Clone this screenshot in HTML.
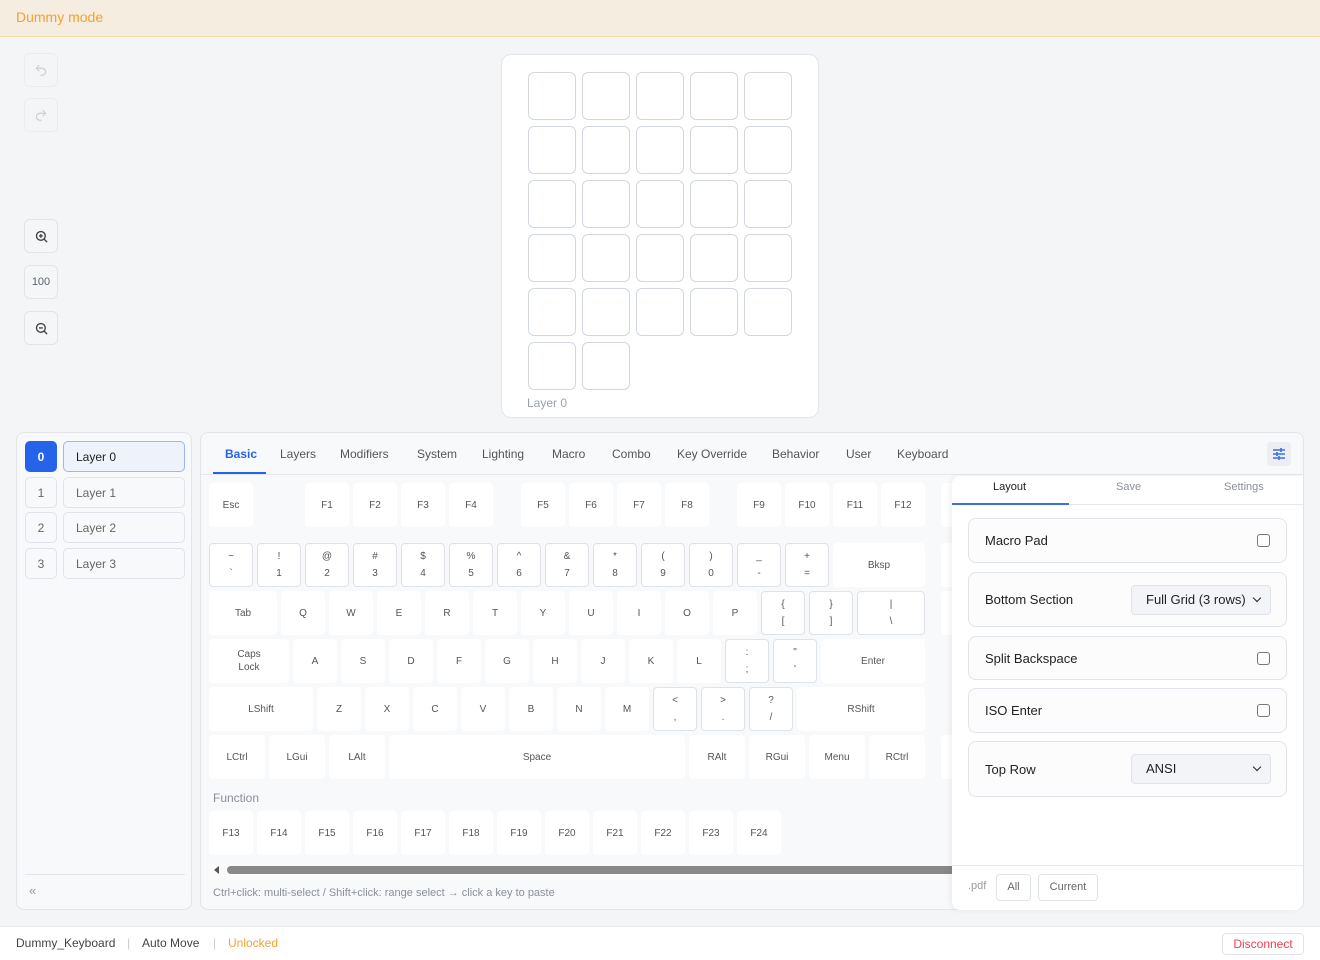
<!DOCTYPE html>
<html><head><meta charset="utf-8"><style>
*{box-sizing:border-box;margin:0;padding:0}
body{width:1320px;height:960px;background:#f4f5f7;font-family:"Liberation Sans",sans-serif;position:relative;overflow:hidden;color:#333}
.a{position:absolute}
.top{left:0;top:0;width:1320px;height:37px;background:#f5ede0;border-bottom:1px solid #f6d9a8;color:#f5a030;font-size:14px;padding:9px 16px}
.sb{position:absolute;left:24px;width:34px;height:34px;border:1px solid #e2e4ea;border-radius:6px;display:flex;align-items:center;justify-content:center;font-size:11px;color:#5a6170;background:#f5f6f8}
.card{background:#fff;border:1px solid #e3e5ea;border-radius:10px}
.mk{position:absolute;width:48px;height:48px;border:1.5px solid #d2d7e0;border-radius:6px;background:#fff}
.k{position:absolute;width:44px;height:44px;background:#fff;border-radius:4px;font-size:10px;color:#555;display:flex;align-items:center;justify-content:center;text-align:center;line-height:13px}
.b{border:1px solid #dfe2e8}
.d{flex-direction:column;justify-content:space-around;padding:4px 0}
.tab{position:absolute;top:447px;font-size:12px;color:#555}
.row{position:absolute;left:968px;width:319px;border:1px solid #e1e3ea;border-radius:8px;background:#fcfcfd;font-size:13px;color:#222;padding-left:16px;display:flex;align-items:center}
.cb{position:absolute;right:16px;width:13px;height:13px;border:1.3px solid #777;border-radius:3px}
.sel{position:absolute;left:162px;width:140px;height:30px;background:#f3f4f7;border:1px solid #e1e3ea;border-radius:4px;font-size:13px;padding:6px 14px;color:#222}
.sel:after{content:"";position:absolute;right:10px;top:9px;width:5px;height:5px;border-right:1.6px solid #222;border-bottom:1.6px solid #222;transform:rotate(45deg)}
.ln{position:absolute;left:25px;width:32px;height:31px;border:1px solid #e1e3ea;border-radius:5px;font-size:12px;color:#666;display:flex;align-items:center;justify-content:center}
.lb{position:absolute;left:63px;width:122px;height:31px;border:1px solid #e1e3ea;border-radius:5px;font-size:12px;color:#666;padding:8px 12px}
</style></head><body>
<div class="a top">Dummy mode</div>

<div class="sb" style="top:53px;opacity:.5"><svg width="14" height="14" viewBox="0 0 24 24" fill="none" stroke="#aaa" stroke-width="2"><path d="M9 14L4 9l5-5"/><path d="M4 9h10a6 6 0 0 1 0 12h-3"/></svg></div>
<div class="sb" style="top:98px;opacity:.5"><svg width="14" height="14" viewBox="0 0 24 24" fill="none" stroke="#aaa" stroke-width="2"><path d="M15 14l5-5-5-5"/><path d="M20 9H10a6 6 0 0 0 0 12h3"/></svg></div>
<div class="sb" style="top:219px"><svg width="15" height="15" viewBox="0 0 24 24" fill="none" stroke="#444" stroke-width="2.2"><circle cx="11" cy="11" r="7"/><path d="M21 21l-5-5M11 8v6M8 11h6"/></svg></div>
<div class="sb" style="top:265px">100</div>
<div class="sb" style="top:311px"><svg width="15" height="15" viewBox="0 0 24 24" fill="none" stroke="#444" stroke-width="2.2"><circle cx="11" cy="11" r="7"/><path d="M21 21l-5-5M8 11h6"/></svg></div>

<div class="a card" style="left:501px;top:54px;width:318px;height:364px"></div>
<div class="mk" style="left:528px;top:72px"></div><div class="mk" style="left:582px;top:72px"></div><div class="mk" style="left:636px;top:72px"></div><div class="mk" style="left:690px;top:72px"></div><div class="mk" style="left:744px;top:72px"></div>
<div class="mk" style="left:528px;top:126px"></div><div class="mk" style="left:582px;top:126px"></div><div class="mk" style="left:636px;top:126px"></div><div class="mk" style="left:690px;top:126px"></div><div class="mk" style="left:744px;top:126px"></div>
<div class="mk" style="left:528px;top:180px"></div><div class="mk" style="left:582px;top:180px"></div><div class="mk" style="left:636px;top:180px"></div><div class="mk" style="left:690px;top:180px"></div><div class="mk" style="left:744px;top:180px"></div>
<div class="mk" style="left:528px;top:234px"></div><div class="mk" style="left:582px;top:234px"></div><div class="mk" style="left:636px;top:234px"></div><div class="mk" style="left:690px;top:234px"></div><div class="mk" style="left:744px;top:234px"></div>
<div class="mk" style="left:528px;top:288px"></div><div class="mk" style="left:582px;top:288px"></div><div class="mk" style="left:636px;top:288px"></div><div class="mk" style="left:690px;top:288px"></div><div class="mk" style="left:744px;top:288px"></div>
<div class="mk" style="left:528px;top:342px"></div><div class="mk" style="left:582px;top:342px"></div>
<div class="a" style="left:527px;top:396px;font-size:12px;color:#9aa0ad">Layer 0</div>

<!-- layer panel -->
<div class="a" style="left:16px;top:432px;width:176px;height:478px;background:#f8f9fb;border:1px solid #e3e5ea;border-radius:8px"></div>
<div class="ln" style="top:441px;background:#2563eb;border-color:#2563eb;color:#fff;font-weight:bold">0</div>
<div class="lb" style="top:441px;background:#eef2fb;border-color:#9db6f0;color:#222">Layer 0</div>
<div class="ln" style="top:477px">1</div><div class="lb" style="top:477px">Layer 1</div>
<div class="ln" style="top:512px">2</div><div class="lb" style="top:512px">Layer 2</div>
<div class="ln" style="top:548px">3</div><div class="lb" style="top:548px">Layer 3</div>
<div class="a" style="left:25px;top:874px;width:160px;height:1px;background:#e3e5ea"></div>
<div class="a" style="left:29px;top:883px;font-size:13px;color:#999">«</div>

<!-- keyboard panel -->
<div class="a" style="left:200px;top:432px;width:1104px;height:478px;background:#f8f9fb;border:1px solid #e3e5ea;border-radius:8px;overflow:hidden"></div>
<div class="a" style="left:201px;top:474px;width:1102px;height:1px;background:#e6e8ed"></div>
<div class="tab" style="left:225px;color:#2563eb;font-weight:bold">Basic</div>
<div class="a" style="left:213px;top:472px;width:53px;height:2px;background:#2563eb"></div>
<div class="tab" style="left:280px">Layers</div><div class="tab" style="left:340px">Modifiers</div><div class="tab" style="left:417px">System</div><div class="tab" style="left:482px">Lighting</div><div class="tab" style="left:552px">Macro</div><div class="tab" style="left:612px">Combo</div><div class="tab" style="left:677px">Key Override</div><div class="tab" style="left:772px">Behavior</div><div class="tab" style="left:846px">User</div><div class="tab" style="left:897px">Keyboard</div>
<div class="a" style="left:1267px;top:442px;width:24px;height:24px;background:#eceef3;border-radius:4px"><svg width="24" height="24" viewBox="0 0 24 24" stroke="#3b6ee8" stroke-width="1.6"><path d="M6 8h12M6 12h12M6 16h12M14 6v4M10 10v4M12 14v4"/></svg></div>

<!-- F row -->
<div class="k" style="left:209px;top:483px">Esc</div>
<div class="k" style="left:305px;top:483px">F1</div><div class="k" style="left:353px;top:483px">F2</div><div class="k" style="left:401px;top:483px">F3</div><div class="k" style="left:449px;top:483px">F4</div>
<div class="k" style="left:521px;top:483px">F5</div><div class="k" style="left:569px;top:483px">F6</div><div class="k" style="left:617px;top:483px">F7</div><div class="k" style="left:665px;top:483px">F8</div>
<div class="k" style="left:737px;top:483px">F9</div><div class="k" style="left:785px;top:483px">F10</div><div class="k" style="left:833px;top:483px">F11</div><div class="k" style="left:881px;top:483px">F12</div>
<div class="k" style="left:941px;top:483px">S</div>
<!-- number row -->
<div class="k b d" style="left:209px;top:543px"><span>~</span><span>`</span></div>
<div class="k b d" style="left:257px;top:543px"><span>!</span><span>1</span></div>
<div class="k b d" style="left:305px;top:543px"><span>@</span><span>2</span></div>
<div class="k b d" style="left:353px;top:543px"><span>#</span><span>3</span></div>
<div class="k b d" style="left:401px;top:543px"><span>$</span><span>4</span></div>
<div class="k b d" style="left:449px;top:543px"><span>%</span><span>5</span></div>
<div class="k b d" style="left:497px;top:543px"><span>^</span><span>6</span></div>
<div class="k b d" style="left:545px;top:543px"><span>&amp;</span><span>7</span></div>
<div class="k b d" style="left:593px;top:543px"><span>*</span><span>8</span></div>
<div class="k b d" style="left:641px;top:543px"><span>(</span><span>9</span></div>
<div class="k b d" style="left:689px;top:543px"><span>)</span><span>0</span></div>
<div class="k b d" style="left:737px;top:543px"><span>_</span><span>-</span></div>
<div class="k b d" style="left:785px;top:543px"><span>+</span><span>=</span></div>
<div class="k" style="left:833px;top:543px;width:92px">Bksp</div>
<div class="k" style="left:941px;top:543px"></div>
<!-- Q row -->
<div class="k" style="left:209px;top:591px;width:68px">Tab</div>
<div class="k" style="left:281px;top:591px">Q</div><div class="k" style="left:329px;top:591px">W</div><div class="k" style="left:377px;top:591px">E</div><div class="k" style="left:425px;top:591px">R</div><div class="k" style="left:473px;top:591px">T</div><div class="k" style="left:521px;top:591px">Y</div><div class="k" style="left:569px;top:591px">U</div><div class="k" style="left:617px;top:591px">I</div><div class="k" style="left:665px;top:591px">O</div><div class="k" style="left:713px;top:591px">P</div>
<div class="k b d" style="left:761px;top:591px"><span>{</span><span>[</span></div>
<div class="k b d" style="left:809px;top:591px"><span>}</span><span>]</span></div>
<div class="k b d" style="left:857px;top:591px;width:68px"><span>|</span><span>\</span></div>
<div class="k" style="left:941px;top:591px"></div>
<!-- A row -->
<div class="k" style="left:209px;top:639px;width:80px">Caps<br>Lock</div>
<div class="k" style="left:293px;top:639px">A</div><div class="k" style="left:341px;top:639px">S</div><div class="k" style="left:389px;top:639px">D</div><div class="k" style="left:437px;top:639px">F</div><div class="k" style="left:485px;top:639px">G</div><div class="k" style="left:533px;top:639px">H</div><div class="k" style="left:581px;top:639px">J</div><div class="k" style="left:629px;top:639px">K</div><div class="k" style="left:677px;top:639px">L</div>
<div class="k b d" style="left:725px;top:639px"><span>:</span><span>;</span></div>
<div class="k b d" style="left:773px;top:639px"><span>"</span><span>'</span></div>
<div class="k" style="left:821px;top:639px;width:104px">Enter</div>
<!-- Z row -->
<div class="k" style="left:209px;top:687px;width:104px">LShift</div>
<div class="k" style="left:317px;top:687px">Z</div><div class="k" style="left:365px;top:687px">X</div><div class="k" style="left:413px;top:687px">C</div><div class="k" style="left:461px;top:687px">V</div><div class="k" style="left:509px;top:687px">B</div><div class="k" style="left:557px;top:687px">N</div><div class="k" style="left:605px;top:687px">M</div>
<div class="k b d" style="left:653px;top:687px"><span>&lt;</span><span>,</span></div>
<div class="k b d" style="left:701px;top:687px"><span>&gt;</span><span>.</span></div>
<div class="k b d" style="left:749px;top:687px"><span>?</span><span>/</span></div>
<div class="k" style="left:797px;top:687px;width:128px">RShift</div>
<!-- bottom -->
<div class="k" style="left:209px;top:735px;width:56px">LCtrl</div>
<div class="k" style="left:269px;top:735px;width:56px">LGui</div>
<div class="k" style="left:329px;top:735px;width:56px">LAlt</div>
<div class="k" style="left:389px;top:735px;width:296px">Space</div>
<div class="k" style="left:689px;top:735px;width:56px">RAlt</div>
<div class="k" style="left:749px;top:735px;width:56px">RGui</div>
<div class="k" style="left:809px;top:735px;width:56px">Menu</div>
<div class="k" style="left:869px;top:735px;width:56px">RCtrl</div>
<div class="k" style="left:941px;top:735px"></div>

<div class="a" style="left:213px;top:791px;font-size:12px;color:#8a8f9a">Function</div>
<div class="k" style="left:209px;top:811px">F13</div><div class="k" style="left:257px;top:811px">F14</div><div class="k" style="left:305px;top:811px">F15</div><div class="k" style="left:353px;top:811px">F16</div><div class="k" style="left:401px;top:811px">F17</div><div class="k" style="left:449px;top:811px">F18</div><div class="k" style="left:497px;top:811px">F19</div><div class="k" style="left:545px;top:811px">F20</div><div class="k" style="left:593px;top:811px">F21</div><div class="k" style="left:641px;top:811px">F22</div><div class="k" style="left:689px;top:811px">F23</div><div class="k" style="left:737px;top:811px">F24</div>

<div class="a" style="left:209px;top:863px;width:745px;height:15px;background:#fafafa"></div>
<div class="a" style="left:214px;top:866px;width:0;height:0;border-top:4px solid transparent;border-bottom:4px solid transparent;border-right:5px solid #555"></div>
<div class="a" style="left:227px;top:866px;width:727px;height:8px;background:#888;border-radius:4px 0 0 4px"></div>
<div class="a" style="left:213px;top:887px;font-size:11px;color:#8a8f9a">Ctrl+click: multi-select / Shift+click: range select → click a key to paste</div>

<!-- right settings panel -->
<div class="a" style="left:952px;top:476px;width:351px;height:434px;background:#fff;border-radius:8px 0 8px 8px;box-shadow:-2px 0 6px rgba(0,0,0,.06)"></div>
<div class="a" style="left:993px;top:481px;font-size:11px;color:#222">Layout</div>
<div class="a" style="left:1116px;top:481px;font-size:11px;color:#8a8f9a">Save</div>
<div class="a" style="left:1224px;top:481px;font-size:11px;color:#8a8f9a">Settings</div>
<div class="a" style="left:952px;top:504px;width:351px;height:1px;background:#e6e8ed"></div>
<div class="a" style="left:952px;top:503px;width:117px;height:2px;background:#3b6ee8"></div>
<div class="row" style="top:518px;height:45px">Macro Pad<div class="cb"></div></div>
<div class="row" style="top:572px;height:55px">Bottom Section<div class="sel" style="top:12px">Full Grid (3 rows)</div></div>
<div class="row" style="top:636px;height:44px">Split Backspace<div class="cb"></div></div>
<div class="row" style="top:688px;height:45px">ISO Enter<div class="cb"></div></div>
<div class="row" style="top:741px;height:56px">Top Row<div class="sel" style="top:12px">ANSI</div></div>
<div class="a" style="left:952px;top:865px;width:351px;height:1px;background:#e6e8ed"></div>
<div class="a" style="left:968px;top:880px;font-size:11px;color:#999">.pdf</div>
<div class="a" style="left:996px;top:874px;width:35px;height:27px;border:1px solid #e1e3ea;border-radius:4px;font-size:11px;color:#666;text-align:center;padding-top:6px">All</div>
<div class="a" style="left:1038px;top:874px;width:60px;height:27px;border:1px solid #e1e3ea;border-radius:4px;font-size:11px;color:#666;text-align:center;padding-top:6px">Current</div>

<!-- footer -->
<div class="a" style="left:0;top:926px;width:1320px;height:34px;background:#fff;border-top:1px solid #e9eaee"></div>
<div class="a" style="left:16px;top:936px;font-size:12px;color:#444">Dummy_Keyboard</div>
<div class="a" style="left:127px;top:936px;font-size:12px;color:#ccc">|</div>
<div class="a" style="left:142px;top:936px;font-size:12px;color:#444">Auto Move</div>
<div class="a" style="left:213px;top:936px;font-size:12px;color:#ccc">|</div>
<div class="a" style="left:228px;top:936px;font-size:12px;color:#f5a030">Unlocked</div>
<div class="a" style="left:1222px;top:933px;width:82px;height:22px;border:1px solid #e1e3ea;border-radius:4px;font-size:12px;color:#f04050;text-align:center;padding-top:3px">Disconnect</div>
</body></html>
